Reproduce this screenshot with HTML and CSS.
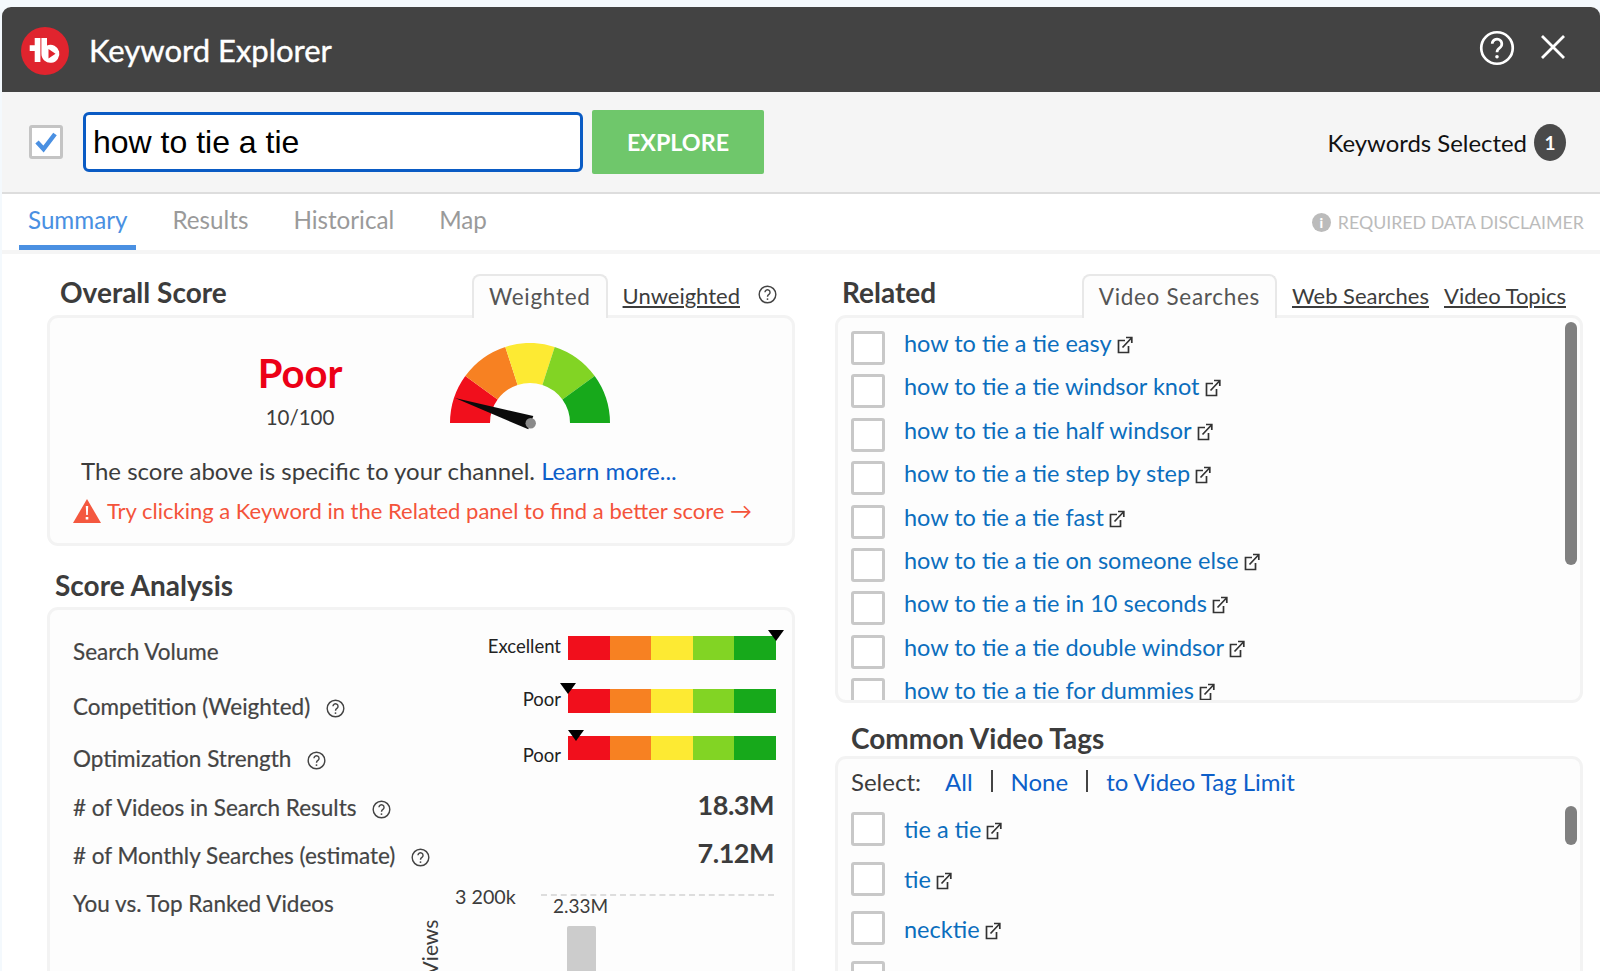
FILE: index.html
```html
<!DOCTYPE html>
<html lang="en">

<head>
  <meta charset="UTF-8">
  <meta name="viewport" content="width=device-width, initial-scale=1.0">
  <title>Keyword Explorer</title>
  <link rel="stylesheet" href="styles.css">
</head>

<body>
  <svg class="icon-defs" width="0" height="0">
    <symbol id="icon-help" viewBox="0 0 24 24">
      <circle cx="12" cy="12" r="10.500" fill="none" stroke="currentColor" stroke-width="1.800" />
      <path d="M8.800 9.200a3.200 3.200 0 1 1 5 2.700c-1.200.8-1.800 1.400-1.800 2.900" fill="none" stroke="currentColor" stroke-width="1.800" />
      <circle cx="12" cy="17.800" r="1.200" fill="currentColor" />
    </symbol>
    <symbol id="icon-link" viewBox="0 0 16 18">
      <path d="M8 4.500H1.500V16.500H11.500V10" fill="none" stroke="#333" stroke-width="1.700" />
      <path d="M5.500 11.500L14 2.500M9 1.500H14.800V7" fill="none" stroke="#333" stroke-width="1.700" />
    </symbol>
  </svg>

  <div class="modal">
    <div class="titlebar">
      <svg class="logo" viewBox="0 0 48 48">
        <circle cx="24" cy="24" r="24" fill="#e0242e" />
        <path d="M13.700 11H19.400V35H13.700V24H8.700V18.300H13.700Z" fill="#fff" />
        <path d="M20.400 11H26V18.500A9 9 0 1 1 20.400 26.600Z" fill="#fff" />
        <path d="M27.500 22V31.500L34.500 26.700Z" fill="#e0242e" />
      </svg>
      <h1>Keyword Explorer</h1>
      <svg class="title-help" width="36" height="36">
        <use href="#icon-help" />
      </svg>
      <svg class="title-close" width="26" height="26" viewBox="0 0 26 26">
        <path d="M2 2L24 24M24 2L2 24" stroke="#fff" stroke-width="2.800" />
      </svg>
    </div>

    <div class="toolbar">
      <span class="main-check">
        <svg width="26" height="26" viewBox="0 0 26 26">
          <path d="M4 13L10.500 20L22 5" fill="none" stroke="#4a90e2" stroke-width="4.500" />
        </svg>
      </span>
      <input class="search" type="text" value="how to tie a tie">
      <button class="explore">EXPLORE</button>
      <span class="selected">Keywords Selected</span>
      <span class="badge">1</span>
    </div>

    <div class="tabs">
      <a class="tab active">Summary</a>
      <a class="tab">Results</a>
      <a class="tab">Historical</a>
      <a class="tab">Map</a>
      <span class="disclaimer"><span class="info">i</span>REQUIRED DATA DISCLAIMER</span>
    </div>

    <div class="panels">
      <div class="col">
        <div class="card-head head-score">
          <h2>Overall Score</h2>
          <span class="subtab">Weighted</span>
          <a class="sublink">Unweighted</a>
          <svg class="help help-head" width="19" height="19">
            <use href="#icon-help" />
          </svg>
        </div>
        <div class="card score-card">
          <div class="score-top">
            <div class="score-text">
              <div class="score-word">Poor</div>
              <div class="score-num">10/100</div>
            </div>
            <svg class="gauge" width="160" height="90" viewBox="0 0 160 90">
              <path d="M0 80A80 80 0 0 1 15.300 33L47.600 56.500A40 40 0 0 0 40 80Z" fill="#f10f1c" />
              <path d="M15.300 33A80 80 0 0 1 55.300 3.900L67.600 42A40 40 0 0 0 47.600 56.500Z" fill="#f78122" />
              <path d="M55.300 3.900A80 80 0 0 1 104.700 3.900L92.400 42A40 40 0 0 0 67.600 42Z" fill="#fdea33" />
              <path d="M104.700 3.900A80 80 0 0 1 144.700 33L112.400 56.500A40 40 0 0 0 92.400 42Z" fill="#82d424" />
              <path d="M144.700 33A80 80 0 0 1 160 80H120A40 40 0 0 0 112.400 56.500Z" fill="#17a91b" />
              <path d="M5 55L83.300 73L78.300 86.300Z" fill="#0b0b0b" />
              <circle cx="80.700" cy="80.300" r="5.200" fill="#8a8a8a" />
            </svg>
          </div>
          <p class="score-note">The score above is specific to your channel. <a class="blue">Learn more...</a></p>
          <p class="score-warn">
            <svg width="28" height="24" viewBox="0 0 28 24">
              <path d="M14 0L28 24H0Z" fill="#f4583f" />
              <path d="M12.800 7H15.200L14.800 16H13.200ZM12.700 18H15.300V20.500H12.700Z" fill="#fff" />
            </svg>
            <span>Try clicking a Keyword in the Related panel to find a better score &#8594;</span>
          </p>
        </div>

        <h2 class="section-title title-analysis">Score Analysis</h2>
        <div class="card analysis-card">
          <div class="row row-meter">
            <span class="row-label">Search Volume</span>
            <div class="meter">
              <span class="meter-label">Excellent</span>
              <div class="bar"><i></i><i></i><i></i><i></i><i></i><b class="marker" style="left: 100%"></b></div>
            </div>
          </div>
          <div class="row row-meter">
            <span class="row-label">Competition (Weighted)<svg class="help" width="19" height="19"><use href="#icon-help" /></svg></span>
            <div class="meter">
              <span class="meter-label">Poor</span>
              <div class="bar"><i></i><i></i><i></i><i></i><i></i><b class="marker" style="left: 0%"></b></div>
            </div>
          </div>
          <div class="row row-meter row-short">
            <span class="row-label">Optimization Strength<svg class="help" width="19" height="19"><use href="#icon-help" /></svg></span>
            <div class="meter">
              <span class="meter-label">Poor</span>
              <div class="bar"><i></i><i></i><i></i><i></i><i></i><b class="marker" style="left: 4%"></b></div>
            </div>
          </div>
          <div class="row">
            <span class="row-label"># of Videos in Search Results<svg class="help" width="19" height="19"><use href="#icon-help" /></svg></span>
            <span class="row-value">18.3M</span>
          </div>
          <div class="row">
            <span class="row-label"># of Monthly Searches (estimate)<svg class="help" width="19" height="19"><use href="#icon-help" /></svg></span>
            <span class="row-value">7.12M</span>
          </div>
          <div class="row row-chart">
            <span class="row-label">You vs. Top Ranked Videos</span>
            <div class="chart">
              <span class="axis-name">Views</span>
              <span class="axis-tick">3 200k</span>
              <span class="chart-line"></span>
              <span class="bar-value">2.33M</span>
              <span class="chart-bar"></span>
            </div>
          </div>
        </div>
      </div>

      <div class="col">
        <div class="card-head head-related">
          <h2>Related</h2>
          <span class="subtab">Video Searches</span>
          <a class="sublink">Web Searches</a>
          <a class="sublink">Video Topics</a>
        </div>
        <div class="card list-card">
          <span class="scrollbar scroll-related"></span>
          <div class="kw-row"><span class="box"></span><a class="kw">how to tie a tie easy<svg width="16" height="18"><use href="#icon-link" /></svg></a></div>
          <div class="kw-row"><span class="box"></span><a class="kw">how to tie a tie windsor knot<svg width="16" height="18"><use href="#icon-link" /></svg></a></div>
          <div class="kw-row"><span class="box"></span><a class="kw">how to tie a tie half windsor<svg width="16" height="18"><use href="#icon-link" /></svg></a></div>
          <div class="kw-row"><span class="box"></span><a class="kw">how to tie a tie step by step<svg width="16" height="18"><use href="#icon-link" /></svg></a></div>
          <div class="kw-row"><span class="box"></span><a class="kw">how to tie a tie fast<svg width="16" height="18"><use href="#icon-link" /></svg></a></div>
          <div class="kw-row"><span class="box"></span><a class="kw">how to tie a tie on someone else<svg width="16" height="18"><use href="#icon-link" /></svg></a></div>
          <div class="kw-row"><span class="box"></span><a class="kw">how to tie a tie in 10 seconds<svg width="16" height="18"><use href="#icon-link" /></svg></a></div>
          <div class="kw-row"><span class="box"></span><a class="kw">how to tie a tie double windsor<svg width="16" height="18"><use href="#icon-link" /></svg></a></div>
          <div class="kw-row"><span class="box"></span><a class="kw">how to tie a tie for dummies<svg width="16" height="18"><use href="#icon-link" /></svg></a></div>
        </div>

        <h2 class="section-title title-tags">Common Video Tags</h2>
        <div class="card tags-card">
          <span class="scrollbar scroll-tags"></span>
          <div class="select-row">
            <span class="select-label">Select:</span>
            <a class="blue">All</a>
            <span class="sep"></span>
            <a class="blue">None</a>
            <span class="sep"></span>
            <a class="blue">to Video Tag Limit</a>
          </div>
          <div class="tag-row"><span class="box"></span><a class="kw">tie a tie<svg width="16" height="18"><use href="#icon-link" /></svg></a></div>
          <div class="tag-row"><span class="box"></span><a class="kw">tie<svg width="16" height="18"><use href="#icon-link" /></svg></a></div>
          <div class="tag-row"><span class="box"></span><a class="kw">necktie<svg width="16" height="18"><use href="#icon-link" /></svg></a></div>
          <div class="tag-row"><span class="box"></span><a class="kw">windsor knot<svg width="16" height="18"><use href="#icon-link" /></svg></a></div>
        </div>
      </div>
    </div>
  </div>
</body>

</html>
```

FILE: styles.css
```css
:root {
  --text-color: #3c3c3c;
  --link-blue: #0d5fc9;
  --kw-blue: #0b6ebd;
  --card-border: #f3f3f3;
}

html,
body {
  height: 100%;
}

body {
  margin: 0;
  overflow: hidden;
  background-color: #f4f9fd;
  color: var(--text-color);
  font-family: Lato, 'Open Sans', sans-serif;
}

h1,
h2,
p {
  margin: 0;
}

.icon-defs {
  position: absolute;
}

.modal {
  height: 964px;
  margin: 7px 0 0 2px;
  overflow: hidden;
  background-color: #fff;
  border-radius: 9px 9px 0 0;
}

/* title bar */
.titlebar {
  display: flex;
  align-items: center;
  height: 85px;
  padding-left: 19px;
  background-color: #434343;
  color: #fff;
  box-sizing: border-box;
}

.logo {
  width: 48px;
  height: 48px;
  margin-top: 2px;
}

.titlebar h1 {
  margin-left: 20px;
  font-size: 31px;
  font-weight: 400;
  -webkit-text-stroke: 0.4px #fff;
}

.title-help {
  margin: -4px 0 0 auto;
}

.title-close {
  margin: -6px 34px 0 25px;
}

/* toolbar */
.toolbar {
  display: flex;
  align-items: center;
  height: 102px;
  padding-left: 27px;
  background-color: #f5f5f5;
  border-bottom: 2px solid #ddd;
  box-sizing: border-box;
}

.main-check {
  display: flex;
  align-items: center;
  justify-content: center;
  width: 34px;
  height: 34px;
  background-color: #fff;
  border: 3px solid #c4c4c4;
  border-radius: 3px;
  box-sizing: border-box;
}

.search {
  width: 500px;
  height: 60px;
  margin-left: 20px;
  padding: 0 7px;
  background-color: #fff;
  border: 3px solid #0a5bc4;
  border-radius: 6px;
  box-sizing: border-box;
  color: #000;
  font-family: 'Liberation Sans', sans-serif;
  font-size: 32px;
}

.explore {
  width: 172px;
  height: 64px;
  margin-left: 9px;
  background-color: #6fc76b;
  border: none;
  border-radius: 2px;
  color: #fff;
  font-family: Lato, sans-serif;
  font-size: 23.300px;
  font-weight: 700;
}

.selected {
  margin-left: auto;
  color: #111;
  font-size: 23.900px;
}

.badge {
  display: flex;
  align-items: center;
  justify-content: center;
  width: 32px;
  height: 37px;
  margin: 0 34px 0 7px;
  background-color: #4a4a4a;
  border-radius: 50%;
  color: #fff;
  font-size: 19px;
  font-weight: 700;
}

/* tabs */
.tabs {
  display: flex;
  align-items: flex-start;
  height: 60px;
  padding-left: 17px;
  border-bottom: 4px solid #f5f5f5;
  box-sizing: border-box;
}

.tab {
  height: 51px;
  padding: 11px 9px 0;
  margin-right: 27px;
  box-sizing: border-box;
  color: #9a9a9a;
  font-size: 24.200px;
}

.tab.active {
  height: 56px;
  color: #4a90e2;
  border-bottom: 5px solid #4a90e2;
}

.disclaimer {
  display: flex;
  align-items: center;
  margin: 17px 16px 0 auto;
  color: #bbb;
  font-size: 17.800px;
}

.info {
  display: flex;
  align-items: center;
  justify-content: center;
  width: 19px;
  height: 19px;
  margin-right: 7px;
  background-color: #bbb;
  border-radius: 50%;
  color: #fff;
  font-size: 14px;
  font-weight: 900;
}

/* panels */
.panels {
  display: grid;
  grid-template-columns: 748px 748px;
  column-gap: 40px;
  padding: 20px 0 0 45px;
}

.card-head {
  position: relative;
  z-index: 1;
  display: flex;
  align-items: flex-start;
  height: 41px;
}

h2 {
  font-size: 28px;
  font-weight: 700;
  color: #3c3c3c;
}

.card-head h2 {
  margin-top: 1px;
}

.head-score {
  padding-left: 13px;
}

.head-score .subtab {
  margin-left: auto;
}

.head-related {
  padding-left: 7px;
}

.head-related .subtab {
  margin-left: auto;
}

.subtab {
  height: 44px;
  padding: 7px 15px 0;
  background-color: #fdfdfd;
  border: 2px solid #e8e8e8;
  border-bottom: none;
  border-radius: 8px 8px 0 0;
  box-sizing: border-box;
  font-size: 22.500px;
  letter-spacing: 0.7px;
  color: #555;
}

.sublink {
  margin: 8px 0 0 15px;
  color: #3c3c3c;
  font-size: 22px;
  text-decoration: underline;
}

.head-related .sublink:last-child {
  margin-right: 17px;
}

.help {
  margin-left: 16px;
  vertical-align: -3px;
  color: #444;
}

.help-head {
  margin: 11px 18px 0 18px;
}

.card {
  position: relative;
  background-color: #fdfdfd;
  border: 3px solid var(--card-border);
  border-radius: 11px;
  box-sizing: border-box;
}

.blue {
  color: var(--link-blue);
}

/* overall score */
.score-card {
  height: 231px;
  padding-left: 29px;
}

.score-top {
  display: flex;
  height: 130px;
}

.score-text {
  width: 160px;
  margin-left: 141px;
  padding-top: 30px;
  text-align: center;
}

.score-word {
  color: #ec0016;
  font-size: 40px;
  font-weight: 700;
  line-height: 50px;
}

.score-num {
  margin-top: 7px;
  font-size: 20.500px;
}

.gauge {
  margin: 25px 0 0 70px;
}

.score-note {
  margin: 8px 0 0 2px;
  font-size: 24px;
}

.score-warn {
  display: flex;
  align-items: center;
  gap: 6px;
  margin: 12px 0 0 -6px;
  color: #f4533a;
  font-size: 22px;
}

/* score analysis */
.section-title {
  line-height: 34px;
}

.title-analysis {
  margin: 22px 0 5px 8px;
}

.analysis-card {
  height: 380px;
  padding: 17px 16px 0 23px;
}

.row {
  display: flex;
  align-items: center;
  justify-content: space-between;
  height: 48px;
  font-size: 22.500px;
}

.row-meter {
  height: 53px;
}

.row-short {
  height: 50px;
}

.row-label {
  color: #444;
  -webkit-text-stroke: 0.2px #444;
}

.row-meter:first-child .row-label {
  margin-top: -4px;
}

.row-value {
  margin: -5px 2px 0 0;
  font-size: 27px;
  font-weight: 700;
  letter-spacing: -0.5px;
}

.meter {
  display: flex;
  align-items: center;
  gap: 7px;
  margin-top: -12px;
}

.row-short .meter {
  margin-top: -21px;
}

.row-short .meter-label {
  margin-top: 15px;
}

.meter-label {
  margin-top: -3px;
  color: #222;
  font-size: 18.500px;
}

.bar {
  position: relative;
  display: flex;
  width: 208px;
  height: 24px;
}

.bar i {
  flex: 1;
}

.bar i:nth-child(1) {
  background-color: #f10f1c;
}

.bar i:nth-child(2) {
  background-color: #f78122;
}

.bar i:nth-child(3) {
  background-color: #fdea33;
}

.bar i:nth-child(4) {
  background-color: #82d424;
}

.bar i:nth-child(5) {
  background-color: #17a91b;
}

.marker {
  position: absolute;
  top: -6px;
  width: 0;
  height: 0;
  margin-left: -8px;
  border-left: 8px solid transparent;
  border-right: 8px solid transparent;
  border-top: 11px solid #000;
}

.row-chart {
  align-items: flex-start;
  padding-top: 11px;
  box-sizing: border-box;
}

.chart {
  position: relative;
  width: 360px;
  height: 100px;
  margin-top: -5px;
}

.axis-tick {
  position: absolute;
  top: 0;
  left: 39px;
  font-size: 19.700px;
}

.chart-line {
  position: absolute;
  top: 9px;
  left: 125px;
  right: 2px;
  border-top: 2px dashed #ddd;
}

.bar-value {
  position: absolute;
  top: 9px;
  left: 137px;
  font-size: 19px;
}

.chart-bar {
  position: absolute;
  top: 41px;
  left: 151px;
  width: 29px;
  height: 80px;
  background-color: #ccc;
  border-radius: 2px 2px 0 0;
}

.axis-name {
  position: absolute;
  top: 50px;
  left: -14px;
  font-size: 21px;
  transform: rotate(-90deg);
}

/* related + tags */
.list-card {
  height: 388px;
  padding: 13px 0 0 13px;
  overflow: hidden;
}

.kw-row,
.tag-row {
  display: flex;
  align-items: center;
  gap: 19px;
  height: 43.400px;
}

.kw-row {
  align-items: flex-start;
}

.kw-row .kw {
  margin-top: -2px;
}

.box {
  flex: none;
  width: 34px;
  height: 34px;
  background-color: #fff;
  border: 3.500px solid #c8c8c8;
  border-radius: 3px;
  box-sizing: border-box;
}

.kw {
  color: var(--kw-blue);
  font-size: 23.500px;
  line-height: 28px;
}

.kw svg {
  margin-left: 5px;
  vertical-align: -2px;
}

.scrollbar {
  position: absolute;
  left: 727px;
  width: 12px;
  background-color: #808080;
  border-radius: 6px;
}

.scroll-related {
  top: 4px;
  height: 243px;
}

.scroll-tags {
  top: 47px;
  height: 39px;
}

.title-tags {
  margin: 18px 0 1px 16px;
}

.tags-card {
  height: 260px;
  padding-left: 13px;
}

.select-row {
  display: flex;
  align-items: center;
  height: 44px;
  font-size: 24px;
}

.select-label {
  margin-right: 24px;
}

.sep {
  width: 2px;
  height: 22px;
  margin: 0 18px;
  background-color: #444;
}

.tag-row {
  height: 49.800px;
}

.tag-row .kw {
  margin-top: 1px;
}

.tags-card .select-row + .tag-row {
  margin-top: 1px;
}
```
